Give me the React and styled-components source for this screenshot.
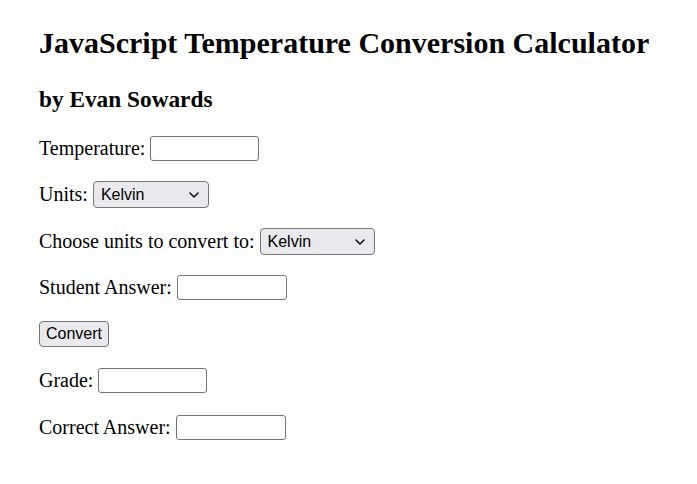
import React, { useState } from "react";
import styled, { createGlobalStyle } from "styled-components";

const GlobalStyle = createGlobalStyle`
  html, body {
    margin: 0;
    padding: 0;
    background: #ffffff;
  }
`;

const Page = styled.div`
  padding: 25px 0 0 39px;
  font-family: "Liberation Serif", "Times New Roman", serif;
  color: #000;
`;

const Title = styled.h1`
  margin: 0;
  font-size: 30px;
  font-weight: bold;
  line-height: 36px;
`;

const Byline = styled.h2`
  margin: 24px 0 0 0;
  font-size: 23.3px;
  font-weight: bold;
  line-height: 28px;
`;

const Form = styled.div`
  display: flex;
  flex-direction: column;
  row-gap: 20.5px;
  margin-top: 22px;
`;

const Row = styled.div`
  display: flex;
  align-items: center;
  column-gap: 5px;
  height: 26px;
  font-size: 20px;
`;

const TextBox = styled.input`
  box-sizing: border-box;
  width: ${(p) => p.$w || 109}px;
  height: 25px;
  border: 1px solid #767676;
  border-radius: 3px;
  padding: 1px 3px;
  font-family: "Liberation Sans", Arial, sans-serif;
  font-size: 16px;
  background: #fff;
`;

const SelectWrap = styled.span`
  position: relative;
  display: inline-flex;
`;

const Select = styled.select`
  appearance: none;
  box-sizing: border-box;
  width: ${(p) => p.$w || 116}px;
  height: 27px;
  border: 1px solid #767676;
  border-radius: 4px;
  background: #e9e9ed;
  color: #000;
  padding: 0 20px 0 7px;
  font-family: "Liberation Sans", Arial, sans-serif;
  font-size: 16px;
`;

const Chevron = styled.svg`
  position: absolute;
  right: 10px;
  top: 11px;
  width: 10px;
  height: 6px;
  pointer-events: none;
`;

const Button = styled.button`
  box-sizing: border-box;
  width: 70px;
  height: 26px;
  border: 1px solid #767676;
  border-radius: 4px;
  background: #e9e9ed;
  color: #000;
  padding: 0 5px;
  font-family: "Liberation Sans", Arial, sans-serif;
  font-size: 16px;
`;

const units = ["Kelvin", "Celsius", "Fahrenheit", "Rankine"];

function UnitSelect({ value, onChange, width }) {
  return (
    <SelectWrap>
      <Select value={value} onChange={(e) => onChange(e.target.value)} $w={width}>
        {units.map((u) => (
          <option key={u}>{u}</option>
        ))}
      </Select>
      <Chevron viewBox="0 0 10 6">
        <path d="M1 1 L5 5 L9 1" fill="none" stroke="#111" strokeWidth="1.6" strokeLinecap="round" strokeLinejoin="round" />
      </Chevron>
    </SelectWrap>
  );
}

export default function App() {
  const [from, setFrom] = useState("Kelvin");
  const [to, setTo] = useState("Kelvin");

  return (
    <Page>
      <GlobalStyle />
      <Title>JavaScript Temperature Conversion Calculator</Title>
      <Byline>by Evan Sowards</Byline>
      <Form>
        <Row>
          Temperature: <TextBox type="text" />
        </Row>
        <Row>
          Units:
          <UnitSelect value={from} onChange={setFrom} />
        </Row>
        <Row>
          Choose units to convert to:
          <UnitSelect value={to} onChange={setTo} width={115} />
        </Row>
        <Row>
          Student Answer: <TextBox type="text" $w={110} />
        </Row>
        <Row>
          <Button>Convert</Button>
        </Row>
        <Row>
          Grade: <TextBox type="text" />
        </Row>
        <Row>
          Correct Answer: <TextBox type="text" $w={110} />
        </Row>
      </Form>
    </Page>
  );
}
